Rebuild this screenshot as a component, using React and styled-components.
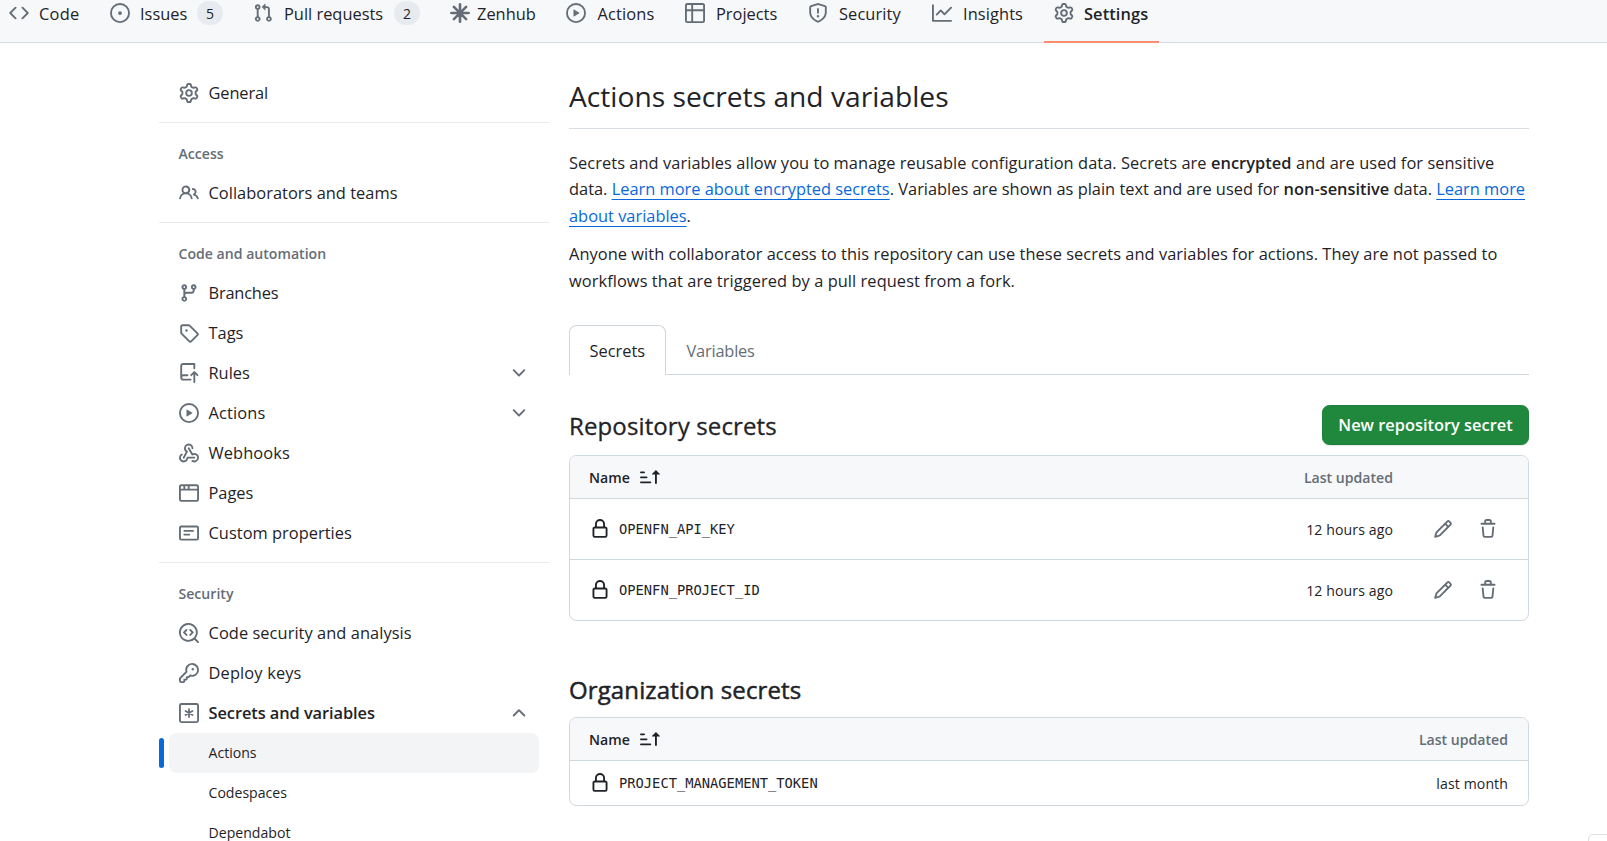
import React from "react";
import styled, { createGlobalStyle } from "styled-components";

const GlobalStyle = createGlobalStyle`
  * { box-sizing: border-box; }
  html, body { margin: 0; padding: 0; }
  body {
    width: 1607px;
    height: 841px;
    overflow: hidden;
    background: #fff;
    color: #1f2328;
    font-family: "Open Sans", "Noto Sans", sans-serif;
    font-size: 16.4px;
  }
`;

/* ---------- icons ---------- */

const paths = {
  code: ["m11.28 3.22 4.25 4.25a.75.75 0 0 1 0 1.06l-4.25 4.25a.749.749 0 0 1-1.275-.326.749.749 0 0 1 .215-.734L13.94 8l-3.72-3.72a.749.749 0 0 1 .326-1.275.749.749 0 0 1 .734.215Zm-6.56 0a.751.751 0 0 1 1.042.018.751.751 0 0 1 .018 1.042L2.06 8l3.72 3.72a.749.749 0 0 1-.326 1.275.749.749 0 0 1-.734-.215L.47 8.53a.75.75 0 0 1 0-1.06Z"],
  issue: ["M8 9.5a1.5 1.5 0 1 0 0-3 1.5 1.5 0 0 0 0 3Z", "M8 0a8 8 0 1 1 0 16A8 8 0 0 1 8 0ZM1.5 8a6.5 6.5 0 1 0 13 0 6.5 6.5 0 0 0-13 0Z"],
  pull: ["M1.5 3.25a2.25 2.25 0 1 1 3 2.122v5.256a2.251 2.251 0 1 1-1.5 0V5.372A2.25 2.25 0 0 1 1.5 3.25Zm5.677-.177L9.573.677A.25.25 0 0 1 10 .854V2.5h1A2.5 2.5 0 0 1 13.5 5v5.628a2.251 2.251 0 1 1-1.5 0V5a1 1 0 0 0-1-1h-1v1.646a.25.25 0 0 1-.427.177L7.177 3.427a.25.25 0 0 1 0-.354ZM3.75 2.5a.75.75 0 1 0 0 1.5.75.75 0 0 0 0-1.5Zm0 9.5a.75.75 0 1 0 0 1.5.75.75 0 0 0 0-1.5Zm8.25.75a.75.75 0 1 0 1.5 0 .75.75 0 0 0-1.5 0Z"],
  play: ["M8 0a8 8 0 1 1 0 16A8 8 0 0 1 8 0ZM1.5 8a6.5 6.5 0 1 0 13 0 6.5 6.5 0 0 0-13 0Zm4.879-2.773 4.264 2.559a.25.25 0 0 1 0 .428l-4.264 2.559A.25.25 0 0 1 6 10.559V5.442a.25.25 0 0 1 .379-.215Z"],
  table: ["M0 1.75C0 .784.784 0 1.75 0h12.5C15.216 0 16 .784 16 1.75v12.5A1.75 1.75 0 0 1 14.25 16H1.75A1.75 1.75 0 0 1 0 14.25ZM6.5 6.5v8h7.75a.25.25 0 0 0 .25-.25V6.5Zm8-1.5V1.75a.25.25 0 0 0-.25-.25H6.5V5Zm-13 1.5v7.75c0 .138.112.25.25.25H5v-8ZM5 5V1.5H1.75a.25.25 0 0 0-.25.25V5Z"],
  shield: ["M7.467.133a1.748 1.748 0 0 1 1.066 0l5.25 1.68A1.75 1.75 0 0 1 15 3.48V7c0 1.566-.32 3.182-1.303 4.682-.983 1.498-2.585 2.813-5.032 3.855a1.697 1.697 0 0 1-1.33 0c-2.447-1.042-4.049-2.357-5.032-3.855C1.32 10.182 1 8.566 1 7V3.48a1.75 1.75 0 0 1 1.217-1.667Zm.61 1.429a.25.25 0 0 0-.153 0l-5.25 1.68a.25.25 0 0 0-.174.238V7c0 1.358.275 2.666 1.057 3.86.784 1.194 2.121 2.34 4.366 3.297a.196.196 0 0 0 .154 0c2.245-.956 3.582-2.104 4.366-3.298C13.225 9.666 13.5 8.36 13.5 7V3.48a.251.251 0 0 0-.174-.237l-5.25-1.68ZM8.75 4.75v3a.75.75 0 0 1-1.5 0v-3a.75.75 0 0 1 1.5 0ZM9 10.5a1 1 0 1 1-2 0 1 1 0 0 1 2 0Z"],
  graph: ["M1.5 1.75V13.5h13.75a.75.75 0 0 1 0 1.5H.75a.75.75 0 0 1-.75-.75V1.75a.75.75 0 0 1 1.5 0Zm14.28 2.53-5.25 5.25a.75.75 0 0 1-1.06 0L7 7.06 4.28 9.78a.751.751 0 0 1-1.042-.018.751.751 0 0 1-.018-1.042l3.25-3.25a.75.75 0 0 1 1.06 0L10 7.94l4.72-4.72a.751.751 0 0 1 1.042.018.751.751 0 0 1 .018 1.042Z"],
  gear: ["M8 0a8.2 8.2 0 0 1 .701.031C9.444.095 9.99.645 10.16 1.29l.288 1.107c.018.066.079.158.212.224.231.114.454.243.668.386.123.082.233.09.299.071l1.103-.303c.644-.176 1.392.021 1.82.63.27.385.506.792.704 1.218.315.675.111 1.422-.364 1.891l-.814.806c-.049.048-.098.147-.088.294.016.257.016.515 0 .772-.01.147.038.246.088.294l.814.806c.475.469.679 1.216.364 1.891a7.977 7.977 0 0 1-.704 1.217c-.428.61-1.176.807-1.82.63l-1.102-.302c-.067-.019-.177-.011-.3.071a5.909 5.909 0 0 1-.668.386c-.133.066-.194.158-.211.224l-.29 1.106c-.168.646-.715 1.196-1.458 1.26a8.006 8.006 0 0 1-1.402 0c-.743-.064-1.289-.614-1.458-1.26l-.289-1.106c-.018-.066-.079-.158-.212-.224a5.738 5.738 0 0 1-.668-.386c-.123-.082-.233-.09-.299-.071l-1.103.303c-.644.176-1.392-.021-1.82-.63a8.12 8.12 0 0 1-.704-1.218c-.315-.675-.111-1.422.363-1.891l.815-.806c.05-.048.098-.147.088-.294a6.214 6.214 0 0 1 0-.772c.01-.147-.038-.246-.088-.294l-.815-.806C.635 6.045.431 5.298.746 4.623a7.92 7.92 0 0 1 .704-1.217c.428-.61 1.176-.807 1.82-.63l1.102.302c.067.019.177.011.3-.071.214-.143.437-.272.668-.386.133-.066.194-.158.211-.224l.29-1.106C6.009.645 6.556.095 7.299.03 7.53.01 7.764 0 8 0Zm-.571 1.525c-.036.003-.108.036-.137.146l-.289 1.105c-.147.561-.549.967-.998 1.189-.173.086-.34.183-.5.29-.417.278-.97.423-1.529.27l-1.103-.303c-.109-.03-.175.016-.195.045-.22.312-.412.644-.573.99-.014.031-.021.11.059.19l.815.806c.411.406.562.957.53 1.456a4.709 4.709 0 0 0 0 .582c.032.499-.119 1.05-.53 1.456l-.815.806c-.081.08-.073.159-.059.19.162.346.353.677.573.989.02.03.085.076.195.046l1.102-.303c.56-.153 1.113-.008 1.53.27.161.107.328.204.501.29.447.222.85.629.997 1.189l.289 1.105c.029.109.101.143.137.146a6.6 6.6 0 0 0 1.142 0c.036-.003.108-.036.137-.146l.289-1.105c.147-.561.549-.967.998-1.189.173-.086.34-.183.5-.29.417-.278.97-.423 1.529-.27l1.103.303c.109.029.175-.016.195-.045.22-.313.411-.644.573-.99.014-.031.021-.11-.059-.19l-.815-.806c-.411-.406-.562-.957-.53-1.456a4.709 4.709 0 0 0 0-.582c-.032-.499.119-1.05.53-1.456l.815-.806c.081-.08.073-.159.059-.19a6.464 6.464 0 0 0-.573-.989c-.02-.03-.085-.076-.195-.046l-1.102.303c-.56.153-1.113.008-1.53-.27a4.44 4.44 0 0 0-.501-.29c-.447-.222-.85-.629-.997-1.189l-.289-1.105c-.029-.11-.101-.143-.137-.146a6.6 6.6 0 0 0-1.142 0ZM11 8a3 3 0 1 1-6 0 3 3 0 0 1 6 0ZM9.5 8a1.5 1.5 0 1 0-3.001.001A1.5 1.5 0 0 0 9.5 8Z"],
  people: ["M2 5.5a3.5 3.5 0 1 1 5.898 2.549 5.508 5.508 0 0 1 3.034 4.084.75.75 0 1 1-1.482.235 4 4 0 0 0-7.9 0 .75.75 0 0 1-1.482-.236A5.507 5.507 0 0 1 3.102 8.05 3.493 3.493 0 0 1 2 5.5ZM11 4a3.001 3.001 0 0 1 2.22 5.018 5.01 5.01 0 0 1 2.56 3.012.749.749 0 0 1-.885.954.752.752 0 0 1-.549-.514 3.507 3.507 0 0 0-2.522-2.372.75.75 0 0 1-.574-.73v-.352a.75.75 0 0 1 .416-.672A1.5 1.5 0 0 0 11 5.5.75.75 0 0 1 11 4Zm-5.5-.5a2 2 0 1 0-.001 3.999A2 2 0 0 0 5.5 3.5Z"],
  branch: ["M9.5 3.25a2.25 2.25 0 1 1 3 2.122V6A2.5 2.5 0 0 1 10 8.5H6a1 1 0 0 0-1 1v1.128a2.251 2.251 0 1 1-1.5 0V5.372a2.25 2.25 0 1 1 1.5 0v1.836A2.493 2.493 0 0 1 6 7h4a1 1 0 0 0 1-1v-.628A2.25 2.25 0 0 1 9.5 3.25Zm-6 0a.75.75 0 1 0 1.5 0 .75.75 0 0 0-1.5 0Zm8.25-.75a.75.75 0 1 0 0 1.5.75.75 0 0 0 0-1.5ZM4.25 12a.75.75 0 1 0 0 1.5.75.75 0 0 0 0-1.5Z"],
  tag: ["M1 7.775V2.75C1 1.784 1.784 1 2.75 1h5.025c.464 0 .91.184 1.238.513l6.25 6.25a1.75 1.75 0 0 1 0 2.474l-5.026 5.026a1.75 1.75 0 0 1-2.474 0l-6.25-6.25A1.752 1.752 0 0 1 1 7.775Zm1.5 0c0 .066.026.13.073.177l6.25 6.25a.25.25 0 0 0 .354 0l5.025-5.025a.25.25 0 0 0 0-.354l-6.25-6.25a.25.25 0 0 0-.177-.073H2.75a.25.25 0 0 0-.25.25ZM6 5a1 1 0 1 1 0 2 1 1 0 0 1 0-2Z"],
  rules: ["M1 2.5A2.5 2.5 0 0 1 3.5 0h8.75a.75.75 0 0 1 .75.75v3.5a.75.75 0 0 1-1.5 0V1.5h-8a1 1 0 0 0-1 1v6.708A2.493 2.493 0 0 1 3.5 9h3.25a.75.75 0 0 1 0 1.5H3.5a1 1 0 0 0 0 2h5.75a.75.75 0 0 1 0 1.5H3.5A2.5 2.5 0 0 1 1 11.5Zm13.23 7.79h-.001l-1.224-1.224v6.184a.75.75 0 0 1-1.5 0V9.066L10.28 10.29a.75.75 0 0 1-1.06-1.061l2.505-2.504a.75.75 0 0 1 1.06 0L15.29 9.23a.751.751 0 0 1-.018 1.042.751.751 0 0 1-1.042.018Z"],
  webhook: ["M5.5 4.25a2.25 2.25 0 0 1 4.5 0 .75.75 0 0 0 1.5 0 3.75 3.75 0 1 0-6.14 2.889l-2.272 4.258a.75.75 0 0 0 1.324.706L7 7.25a.75.75 0 0 0-.309-1.015A2.25 2.25 0 0 1 5.5 4.25Z", "M7.364 3.607a.75.75 0 0 1 1.03.257l2.608 4.349a3.75 3.75 0 1 1-.628 6.785.75.75 0 0 1 .752-1.299 2.25 2.25 0 1 0-.033-3.88.75.75 0 0 1-1.03-.256L7.107 4.636a.75.75 0 0 1 .257-1.03Z", "M2.9 8.776A.75.75 0 0 1 2.625 9.8 2.25 2.25 0 1 0 6 11.75a.75.75 0 0 1 .75-.751h5.5a.75.75 0 0 1 0 1.5H7.425a3.751 3.751 0 1 1-5.55-3.998.75.75 0 0 1 1.024.274Z"],
  browser: ["M0 2.75C0 1.784.784 1 1.75 1h12.5c.966 0 1.75.784 1.75 1.75v10.5A1.75 1.75 0 0 1 14.25 15H1.75A1.75 1.75 0 0 1 0 13.25ZM14.5 6h-13v7.25c0 .138.112.25.25.25h12.5a.25.25 0 0 0 .25-.25Zm-6-3.5v2h6V2.75a.25.25 0 0 0-.25-.25ZM5 2.5v2h2v-2Zm-3.25 0a.25.25 0 0 0-.25.25V4.5h2v-2Z"],
  note: ["M0 3.75C0 2.784.784 2 1.75 2h12.5c.966 0 1.75.784 1.75 1.75v8.5A1.75 1.75 0 0 1 14.25 14H1.75A1.75 1.75 0 0 1 0 12.25Zm1.75-.25a.25.25 0 0 0-.25.25v8.5c0 .138.112.25.25.25h12.5a.25.25 0 0 0 .25-.25v-8.5a.25.25 0 0 0-.25-.25ZM3.5 6.25a.75.75 0 0 1 .75-.75h7a.75.75 0 0 1 0 1.5h-7a.75.75 0 0 1-.75-.75Zm.75 2.25h4a.75.75 0 0 1 0 1.5h-4a.75.75 0 0 1 0-1.5Z"],
  codescan: ["M8.47 4.97a.75.75 0 0 0 0 1.06L9.94 7.5 8.47 8.97a.75.75 0 1 0 1.06 1.06l2-2a.75.75 0 0 0 0-1.06l-2-2a.75.75 0 0 0-1.06 0ZM6.53 6.03a.75.75 0 0 0-1.06-1.06l-2 2a.75.75 0 0 0 0 1.06l2 2a.75.75 0 1 0 1.06-1.06L5.06 7.5l1.47-1.47Z", "M12.246 13.307a7.501 7.501 0 1 1 1.06-1.06l2.474 2.473a.749.749 0 0 1-.326 1.275.749.749 0 0 1-.734-.215ZM1.5 7.5a6.002 6.002 0 0 0 3.608 5.504 6.002 6.002 0 0 0 6.486-1.117.748.748 0 0 1 .292-.293A6 6 0 1 0 1.5 7.5Z"],
  key: ["M10.5 0a5.499 5.499 0 1 1-1.288 10.848l-.932.932a.749.749 0 0 1-.53.22H7v.75a.749.749 0 0 1-.22.53l-.5.5a.749.749 0 0 1-.53.22H5v.75a.749.749 0 0 1-.22.53l-.5.5a.749.749 0 0 1-.53.22h-2A1.75 1.75 0 0 1 0 14.25v-2c0-.199.079-.389.22-.53l4.932-4.932A5.5 5.5 0 0 1 10.5 0Zm-4 5.5c-.001.431.069.86.205 1.269a.75.75 0 0 1-.181.768L1.5 12.56v1.69c0 .138.112.25.25.25h1.69l.06-.06v-1.19a.75.75 0 0 1 .75-.75h1.19l.06-.06v-1.19a.75.75 0 0 1 .75-.75h1.19l1.023-1.025a.75.75 0 0 1 .768-.18A4 4 0 1 0 6.5 5.5ZM11 6a1 1 0 1 1 0-2 1 1 0 0 1 0 2Z"],
  down: ["M12.78 5.22a.749.749 0 0 1 0 1.06l-4.25 4.25a.749.749 0 0 1-1.06 0L3.22 6.28a.749.749 0 1 1 1.06-1.06L8 8.939l3.72-3.719a.749.749 0 0 1 1.06 0Z"],
  up: ["M3.22 10.53a.749.749 0 0 1 0-1.06l4.25-4.25a.749.749 0 0 1 1.06 0l4.25 4.25a.749.749 0 1 1-1.06 1.06L8 6.811 4.28 10.53a.749.749 0 0 1-1.06 0Z"],
  lock: ["M4 4a4 4 0 0 1 8 0v2h.25c.966 0 1.75.784 1.75 1.75v5.5A1.75 1.75 0 0 1 12.25 15h-8.5A1.75 1.75 0 0 1 2 13.25v-5.5C2 6.784 2.784 6 3.75 6H4Zm8.25 3.5h-8.5a.25.25 0 0 0-.25.25v5.5c0 .138.112.25.25.25h8.5a.25.25 0 0 0 .25-.25v-5.5a.25.25 0 0 0-.25-.25ZM10.5 6V4a2.5 2.5 0 1 0-5 0v2Z"],
  pencil: ["M11.013 1.427a1.75 1.75 0 0 1 2.474 0l1.086 1.086a1.75 1.75 0 0 1 0 2.474l-8.61 8.61c-.21.21-.47.364-.756.445l-3.251.93a.75.75 0 0 1-.927-.928l.929-3.25c.081-.286.235-.547.445-.758l8.61-8.61Zm.176 4.823L9.75 4.81l-6.286 6.287a.253.253 0 0 0-.064.108l-.558 1.953 1.953-.558a.253.253 0 0 0 .108-.064Zm1.238-3.763a.25.25 0 0 0-.354 0L10.811 3.75l1.439 1.44 1.263-1.263a.25.25 0 0 0 0-.354Z"],
  trash: ["M11 1.75V3h2.25a.75.75 0 0 1 0 1.5H2.75a.75.75 0 0 1 0-1.5H5V1.75C5 .784 5.784 0 6.75 0h2.5C10.216 0 11 .784 11 1.75ZM4.496 6.675l.66 6.6a.25.25 0 0 0 .249.225h5.19a.25.25 0 0 0 .249-.225l.66-6.6a.75.75 0 0 1 1.492.149l-.66 6.6A1.748 1.748 0 0 1 10.595 15h-5.19a1.75 1.75 0 0 1-1.741-1.575l-.66-6.6a.75.75 0 1 1 1.492-.15ZM6.5 1.75V3h3V1.75a.25.25 0 0 0-.25-.25h-2.5a.25.25 0 0 0-.25.25Z"],
  sort: ["m12.927 2.573 3 3A.25.25 0 0 1 15.75 6H13.5v6.75a.75.75 0 0 1-1.5 0V6H9.75a.25.25 0 0 1-.177-.427l3-3a.25.25 0 0 1 .354 0ZM0 12.25a.75.75 0 0 1 .75-.75h7.5a.75.75 0 0 1 0 1.5H.75a.75.75 0 0 1-.75-.75Zm0-4a.75.75 0 0 1 .75-.75h4.5a.75.75 0 0 1 0 1.5H.75A.75.75 0 0 1 0 8.25Zm0-4a.75.75 0 0 1 .75-.75h2.5a.75.75 0 0 1 0 1.5H.75A.75.75 0 0 1 0 4.25Z"],
};

const Svg = styled.svg`
  flex: none;
  display: block;
  width: 20px;
  height: 20px;
  color: ${(p) => (p.$dark ? "#1f2328" : "#656d76")};
  fill: currentColor;
`;

function Icon({ name, dark }) {
  if (name === "zenhub") {
    return (
      <Svg viewBox="0 0 16 16">
        <path
          d="M8 1.1v13.8M1.1 8h13.8M3.1 3.1l9.8 9.8M12.9 3.1l-9.8 9.8"
          fill="none"
          stroke="currentColor"
          strokeWidth="2.1"
          strokeLinecap="round"
        />
      </Svg>
    );
  }
  if (name === "secret") {
    return (
      <Svg viewBox="0 0 16 16">
        <rect x=".75" y=".75" width="14.5" height="14.5" rx="1.2" fill="none" stroke="currentColor" strokeWidth="1.5" />
        <path
          d="M8 4.8v6.4M5.2 6.4l5.6 3.2M10.8 6.4l-5.6 3.2"
          fill="none"
          stroke="currentColor"
          strokeWidth="1.4"
          strokeLinecap="round"
        />
      </Svg>
    );
  }
  return (
    <Svg viewBox="0 0 16 16" $dark={dark}>
      {paths[name].map((d) => (
        <path key={d} d={d} fillRule="evenodd" />
      ))}
    </Svg>
  );
}

/* ---------- repository navigation ---------- */

const NavBar = styled.nav`
  display: flex;
  align-items: flex-start;
  gap: 10px;
  height: 43px;
  background: #f6f8fa;
  border-bottom: 1px solid #d4dae0;
`;

const NavItem = styled.div`
  display: flex;
  flex: none;
  align-items: flex-start;
  gap: ${(p) => p.$gap || 10}px;
  height: 43px;
  padding: 3px 10px 0;
  border-bottom: 2px solid ${(p) => (p.$active ? "#fd8c73" : "transparent")};
  font-weight: ${(p) => (p.$active ? 600 : 400)};
  &:first-child { padding-left: 9px; }
`;

const NavLabel = styled.span`
  width: ${(p) => p.$w}px;
  padding-left: ${(p) => p.$pad || 0}px;
  line-height: 22px;
  white-space: nowrap;
  letter-spacing: ${(p) => p.$ls || 0}px;
`;

const Counter = styled.span`
  width: 26px;
  height: 24px;
  margin-top: -2px;
  border-radius: 12px;
  background: #e7eaee;
  font-size: 14px;
  line-height: 25px;
  text-align: center;
`;

const navItems = [
  { icon: "code", label: "Code", w: 41, ls: 0.3 },
  { icon: "issue", label: "Issues", w: 47, count: 5 },
  { icon: "pull", label: "Pull requests", w: 101, count: 2, pad: 1 },
  { icon: "zenhub", label: "Zenhub", w: 59, gap: 7 },
  { icon: "play", label: "Actions", w: 59, ls: 0.15, pad: 1.5 },
  { icon: "table", label: "Projects", w: 63, pad: 1 },
  { icon: "shield", label: "Security", w: 64, ls: 0.1, pad: 1 },
  { icon: "graph", label: "Insights", w: 62, ls: 0.1, pad: 1 },
  { icon: "gear", label: "Settings", w: 65, ls: 0.1, active: true },
];

/* ---------- sidebar ---------- */

const Page = styled.div`
  display: flex;
  align-items: flex-start;
  gap: 20px;
  height: 798px;
  padding-left: 159px;
  overflow: hidden;
`;

const Sidebar = styled.aside`
  display: flex;
  flex: none;
  flex-direction: column;
  width: 390px;
  padding-top: 30px;
`;

const Divider = styled.hr`
  width: 390px;
  height: 1px;
  margin: 9px 0 10px;
  border: 0;
  background: #e6e9ed;
`;

const GroupTitle = styled.h3`
  height: 40px;
  margin: 0 0 0 19.5px;
  color: #656d76;
  font-size: 14.1px;
  font-weight: 600;
  line-height: 41px;
`;

const SideItem = styled.div`
  display: flex;
  align-items: center;
  gap: 9.5px;
  height: 40px;
  margin: 0 10px;
  padding: 0 10px;
  border-radius: 7.5px;
  font-weight: ${(p) => (p.$bold ? 600 : 400)};
`;

const SideLabel = styled.span`
  flex: 1;
  padding-bottom: 1.5px;
  white-space: nowrap;
  letter-spacing: ${(p) => p.$ls || 0}px;
`;

const SubRow = styled.div`
  display: flex;
  align-items: center;
  gap: 5px;
  height: 40px;
  padding-right: 10px;
`;

const Marker = styled.span`
  width: 5px;
  height: 30px;
  border-radius: 7px;
  background: ${(p) => (p.$on ? "#0969da" : "transparent")};
`;

const SubItem = styled.span`
  flex: 1;
  height: 40px;
  padding-left: 39.5px;
  border-radius: 7.5px;
  background: ${(p) => (p.$on ? "#f3f4f6" : "transparent")};
  font-size: 14.1px;
  line-height: 40px;
`;

const groups = [
  { items: [{ icon: "gear", label: "General", ls: -0.1 }] },
  { title: "Access", items: [{ icon: "people", label: "Collaborators and teams", ls: 0.03 }] },
  {
    title: "Code and automation",
    items: [
      { icon: "branch", label: "Branches", ls: -0.2 },
      { icon: "tag", label: "Tags" },
      { icon: "rules", label: "Rules", chevron: "down" },
      { icon: "play", label: "Actions", chevron: "down", ls: 0.15 },
      { icon: "webhook", label: "Webhooks", ls: 0.1 },
      { icon: "browser", label: "Pages" },
      { icon: "note", label: "Custom properties", ls: 0.03 },
    ],
  },
  {
    title: "Security",
    items: [
      { icon: "codescan", label: "Code security and analysis", ls: 0.06 },
      { icon: "key", label: "Deploy keys", ls: 0.15 },
      { icon: "secret", label: "Secrets and variables", chevron: "up", bold: true, ls: -0.07 },
    ],
  },
];

const subItems = [{ label: "Actions", on: true }, { label: "Codespaces" }, { label: "Dependabot" }];

/* ---------- main column ---------- */

const Main = styled.main`
  width: 960px;
  padding-top: 30px;
`;

const Title = styled.h1`
  height: 56px;
  margin: 0;
  border-bottom: 1px solid #d8dee4;
  font-size: 28.2px;
  font-weight: 400;
  line-height: 47px;
`;

const Paragraph = styled.p`
  margin: 0 0 12.5px;
  line-height: 26.25px;
  white-space: nowrap;
  &:last-child { margin-bottom: 0; }
`;

const Intro = styled.div`
  padding-top: 21px;
`;

const Line = styled.span`
  display: block;
  letter-spacing: ${(p) => p.$ls || 0}px;
`;

const Strong = styled.strong`
  font-weight: 600;
`;

const Link = styled.a`
  color: #0969da;
  text-decoration: underline;
  text-decoration-thickness: 1px;
  text-underline-offset: 4px;
  text-decoration-skip-ink: none;
`;

const Tabs = styled.div`
  display: flex;
  height: 50px;
  margin-top: 31.25px;
  box-shadow: inset 0 -1px 0 #d0d7de;
`;

const Tab = styled.div`
  width: ${(p) => p.$w}px;
  height: 50px;
  padding-left: 19.5px;
  border: 1px solid ${(p) => (p.$on ? "#d0d7de" : "transparent")};
  border-bottom: 0;
  border-radius: 7.5px 7.5px 0 0;
  background: ${(p) => (p.$on ? "#fff" : "transparent")};
  color: ${(p) => (p.$on ? "#1f2328" : "#656d76")};
  line-height: 49px;
  letter-spacing: ${(p) => p.$ls || 0}px;
`;

const SectionHead = styled.div`
  display: flex;
  align-items: flex-start;
  justify-content: space-between;
  height: 40px;
  margin: ${(p) => p.$top}px 0 10px;
`;

const SectionTitle = styled.h2`
  margin: 0;
  padding-top: ${(p) => p.$drop}px;
  font-size: 24px;
  font-weight: 400;
  line-height: 40px;
  letter-spacing: 0.12px;
  -webkit-text-stroke: ${(p) => p.$stroke}px currentColor;
`;

const Button = styled.button`
  width: 207px;
  height: 40px;
  padding: 0;
  border: 1px solid #1c8139;
  border-radius: 7.5px;
  background: #1f883d;
  box-shadow: 0 1px 0 rgba(31, 35, 40, 0.1);
  color: #fff;
  font-family: inherit;
  font-size: 16.4px;
  font-weight: 600;
  line-height: 38px;
  white-space: nowrap;
`;

const Table = styled.div`
  border: 1px solid #d0d7de;
  border-radius: 7.5px;
  overflow: hidden;
`;

const HeadRow = styled.div`
  display: flex;
  align-items: center;
  height: 43px;
  padding: 0 20px 0 19px;
  border-bottom: 1px solid #d0d7de;
  background: #f6f8fa;
  font-size: 14.1px;
  font-weight: 600;
`;

const HeadName = styled.span`
  display: flex;
  flex: 1;
  align-items: center;
  gap: 10px;
`;

const HeadDate = styled.span`
  color: #656d76;
  margin-right: ${(p) => (p.$actions ? 115 : 0)}px;
`;

const Row = styled.div`
  display: flex;
  align-items: center;
  height: ${(p) => p.$h}px;
  padding: 0 20px;
  & + & { border-top: 1px solid #d0d7de; }
`;

const SecretName = styled.code`
  flex: 1;
  padding-left: 9px;
  font-family: "DejaVu Sans Mono", monospace;
  font-size: 13.75px;
`;

const Updated = styled.span`
  font-size: 14.1px;
  letter-spacing: 0.1px;
`;

const Actions = styled.span`
  display: flex;
  gap: 25px;
  width: 115px;
  padding-left: 40px;
`;

const CornerBox = styled.div`
  position: absolute;
  left: 1588px;
  top: 834px;
  width: 30px;
  height: 20px;
  border: 1px solid #dcdfe3;
  border-radius: 5px;
  background: #fff;
`;

function SecretsTable({ rows, rowHeight, actions }) {
  return (
    <Table>
      <HeadRow>
        <HeadName>
          Name <Icon name="sort" dark />
        </HeadName>
        <HeadDate $actions={actions}>Last updated</HeadDate>
      </HeadRow>
      {rows.map((r, i) => (
        <Row key={r.name} $h={rowHeight + (i ? 1 : 0)}>
          <Icon name="lock" dark />
          <SecretName>{r.name}</SecretName>
          <Updated>{r.updated}</Updated>
          {actions && (
            <Actions>
              <Icon name="pencil" />
              <Icon name="trash" />
            </Actions>
          )}
        </Row>
      ))}
    </Table>
  );
}

export default function App() {
  return (
    <>
      <GlobalStyle />
      <NavBar>
        {navItems.map((n) => (
          <NavItem key={n.label} $active={n.active} $gap={n.gap}>
            <Icon name={n.icon} />
            <NavLabel $w={n.w} $ls={n.ls} $pad={n.pad}>{n.label}</NavLabel>
            {n.count && <Counter>{n.count}</Counter>}
          </NavItem>
        ))}
      </NavBar>
      <Page>
        <Sidebar>
          {groups.map((g, i) => (
            <React.Fragment key={g.title || "top"}>
              {i > 0 && <Divider />}
              {g.title && <GroupTitle>{g.title}</GroupTitle>}
              {g.items.map((it) => (
                <SideItem key={it.label} $bold={it.bold}>
                  <Icon name={it.icon} />
                  <SideLabel $ls={it.ls}>{it.label}</SideLabel>
                  {it.chevron && <Icon name={it.chevron} />}
                </SideItem>
              ))}
            </React.Fragment>
          ))}
          {subItems.map((s) => (
            <SubRow key={s.label}>
              <Marker $on={s.on} />
              <SubItem $on={s.on}>{s.label}</SubItem>
            </SubRow>
          ))}
        </Sidebar>
        <Main>
          <Title>Actions secrets and variables</Title>
          <Intro>
            <Paragraph>
              <Line $ls={0.06}>
                Secrets and variables allow you to manage reusable configuration data. Secrets are{" "}
                <Strong>encrypted</Strong> and are used for sensitive
              </Line>
              <Line>
                data. <Link>Learn more about encrypted secrets</Link>. Variables are shown as plain text and are used for{" "}
                <Strong>non-sensitive</Strong> data. <Link>Learn more</Link>
              </Line>
              <Line>
                <Link>about variables</Link>.
              </Line>
            </Paragraph>
            <Paragraph>
              <Line $ls={0.05}>
                Anyone with collaborator access to this repository can use these secrets and variables for actions. They are not passed to
              </Line>
              <Line $ls={0.07}>workflows that are triggered by a pull request from a fork.</Line>
            </Paragraph>
          </Intro>
          <Tabs>
            <Tab $on $w={97}>Secrets</Tab>
            <Tab $w={110} $ls={-0.2}>Variables</Tab>
          </Tabs>
          <SectionHead $top={30}>
            <SectionTitle $drop={1} $stroke={0.3}>Repository secrets</SectionTitle>
            <Button>New repository secret</Button>
          </SectionHead>
          <SecretsTable
            actions
            rowHeight={60}
            rows={[
              { name: "OPENFN_API_KEY", updated: "12 hours ago" },
              { name: "OPENFN_PROJECT_ID", updated: "12 hours ago" },
            ]}
          />
          <SectionHead $top={46}>
            <SectionTitle $drop={3} $stroke={0.5}>Organization secrets</SectionTitle>
          </SectionHead>
          <SecretsTable rowHeight={44} rows={[{ name: "PROJECT_MANAGEMENT_TOKEN", updated: "last month" }]} />
        </Main>
      </Page>
      <CornerBox />
    </>
  );
}
